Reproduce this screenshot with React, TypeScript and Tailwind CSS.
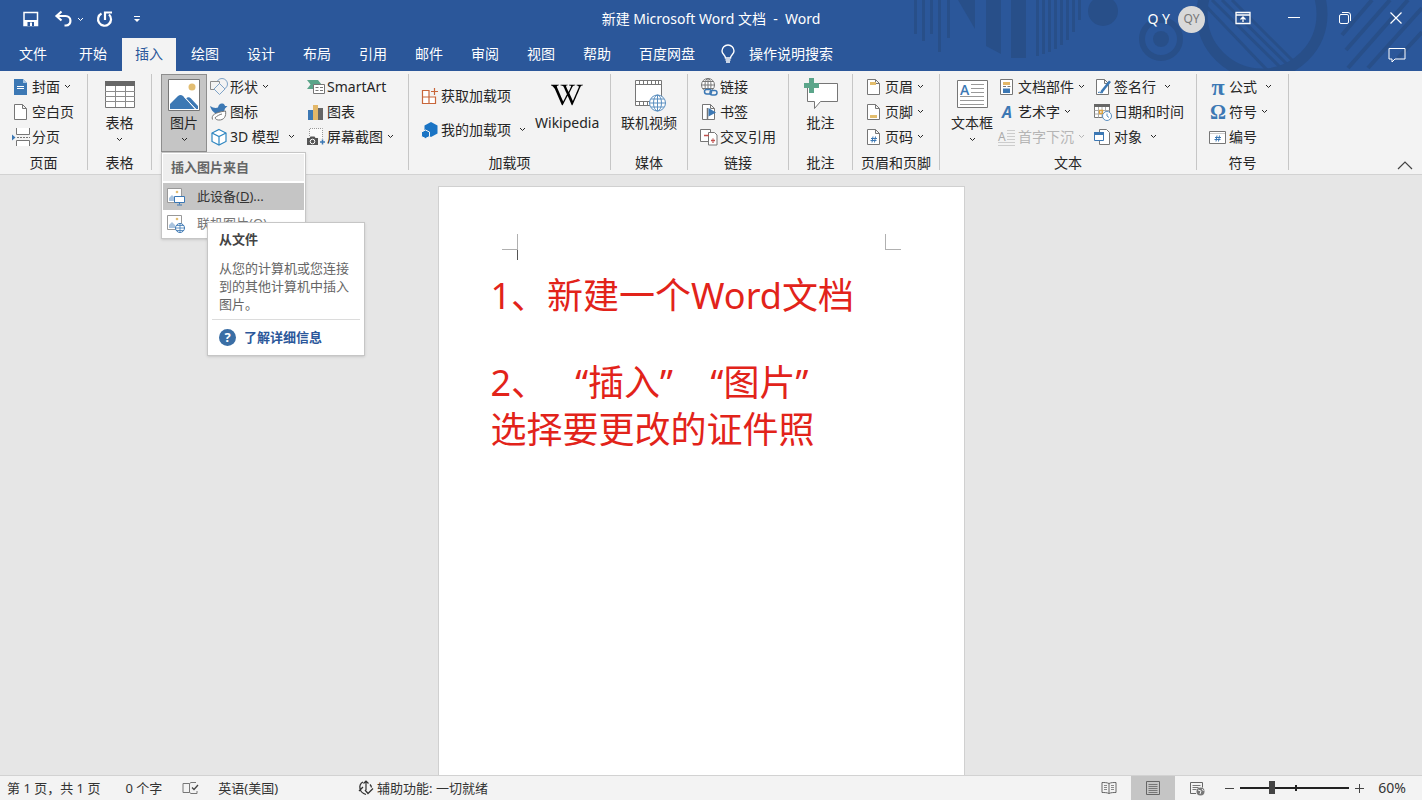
import type { ReactNode } from "react"
import clsx from "clsx"
import { FaWikipediaW } from "react-icons/fa"

const tabs = ["开始", "插入", "绘图", "设计", "布局", "引用", "邮件", "审阅", "视图", "帮助", "百度网盘"]

const BLUE = "#3c78b4"
const GRAY = "#767676"

type IconProps = { w?: number; h?: number; children: ReactNode }

function Svg({ w = 18, h = 18, children }: IconProps) {
  return (
    <svg width={w} height={h} viewBox={`0 0 ${w} ${h}`} fill="none" className="shrink-0 overflow-visible" aria-hidden="true">
      {children}
    </svg>
  )
}

function Chevron({ className }: { className?: string }) {
  return (
    <svg width="7" height="5" viewBox="0 0 7 5" fill="none" className={clsx("shrink-0", className)} aria-hidden="true">
      <path d="M1 1l2.5 2.5L6 1" stroke="currentColor" />
    </svg>
  )
}

const pageOutline = <path d="M2.5 1.5h8l4 4v11h-12z M10.5 1.5v4h4" fill="#fff" stroke={GRAY} />

const icons = {
  cover: (
    <Svg>
      <path d="M2 1h9l4 4v12H2z" fill={BLUE} />
      <path d="M11 1v4h4z" fill="#a9c6e2" />
      <path d="M5 8.500h7M5 10.500h7" stroke="#fff" />
    </Svg>
  ),
  blank: <Svg>{pageOutline}</Svg>,
  pageBreak: (
    <Svg>
      <path d="M4.500 0v6.500h13V0M4.500 18v-5.500h13V18" fill="#fff" stroke={GRAY} />
      <path d="M5 9.500h13" stroke={GRAY} strokeDasharray="2 1" />
      <path d="M0 6.500l3.500 3L0 12.500z" fill={BLUE} />
    </Svg>
  ),
  table: (
    <Svg w={32} h={32}>
      <path d="M1.500 3.500h29v25h-29z" fill="#fff" stroke={GRAY} />
      <path d="M1 2h30v5H1z" fill="#666" />
      <path d="M1 12.500h30M1 17.500h30M1 22.500h30M11.500 7v21M21.500 7v21" stroke="#8c8c8c" />
    </Svg>
  ),
  picture: (
    <Svg w={32} h={32}>
      <path d="M.5.5h31v31H.5z" fill="#fff" stroke={GRAY} />
      <circle cx="24" cy="8" r="3.500" fill="#e2bd72" />
      <path d="M2 30v-5l8-8c1.700-1.500 3.300-1.500 5 0l12 13z" fill={BLUE} />
      <path d="M18 19.500c1.700-1.700 3.300-1.700 5 0l7 7.500v3h-2z" fill={BLUE} />
      <path d="M16.500 18L28 30.500" stroke="#fff" />
    </Svg>
  ),
  shapes: (
    <Svg>
      <circle cx="12" cy="6" r="5.500" stroke="#7fa3c7" />
      <path d="M.5 3.500h9v8h-9z" fill="#f3f3f3" stroke="#8c8c8c" />
      <path d="M9.500 5.500l5.500 5.500-5.500 5.500L4 11z" fill="#f3f3f3" stroke="#7fa3c7" />
    </Svg>
  ),
  iconsBird: (
    <Svg>
      <path d="M0 3c3 2 6 2.500 8 1.500C8.500 1.500 10.500 0 12.500.5c1.600.3 2.300 1.400 2.500 2.500h2.500L15 5.500c-.5 3.500-3 5.300-6.500 5.300C4.500 10.800 1.500 8 0 3z" fill={BLUE} />
      <path d="M2.500 16.500C1 12 5 9.500 15.500 8c1 5-1.500 9.500-7 9-2-.2-3-1-3.500-2.200C7 13 9.500 11.500 12 11" fill="#fff" stroke={GRAY} />
    </Svg>
  ),
  cube: (
    <Svg>
      <path d="M9 1.500l7 3.500v8.500L9 17l-7-3.500V5z" fill="#fff" stroke="#2e86c1" strokeWidth="1.200" />
      <path d="M2 5l7 3.500L16 5M9 8.500V17" stroke="#2e86c1" strokeWidth="1.200" />
    </Svg>
  ),
  smartArt: (
    <Svg>
      <path d="M0 2h11l3.500 4.500L11 11H0l3.500-4.500z" fill="#5ba58a" />
      <path d="M6.500 6.500h11v9h-11z" fill="#fff" stroke={GRAY} />
      <path d="M8.500 9.500h3M13 9.500h3M8.500 12.500h3M13 12.500h3" stroke={GRAY} />
    </Svg>
  ),
  chart: (
    <Svg>
      <path d="M1 7h5v10H1z" fill={BLUE} />
      <path d="M6 2h5v15H6z" fill="#e3b768" />
      <path d="M11 5h5v12h-5z" fill="#666" />
    </Svg>
  ),
  screenshot: (
    <Svg>
      <path d="M2.500 8V.5h13v10" fill="#fafafa" stroke="#999" strokeDasharray="1 1" />
      <path d="M0 10h2.500l1-1.500h4l1 1.500H11v7H0z" fill="#555" />
      <circle cx="5.500" cy="13.500" r="2.300" fill="#555" stroke="#fff" />
      <path d="M15.500 11.500v5M13 14h5" stroke={BLUE} strokeWidth="1.500" />
    </Svg>
  ),
  getAddins: (
    <Svg>
      <path d="M1.500 3.500h6.500v6.500H1.500zM1.500 10h6.500v6.500H1.500zM8 10h6.500v6.500H8z" fill="#fff" stroke="#c8663a" strokeWidth="1.200" />
      <path d="M13.500 1v7M10 4.500h7" stroke="#c8663a" strokeWidth="1.200" />
    </Svg>
  ),
  myAddins: (
    <Svg>
      <path d="M10 1l6.500 3.500v8L10 16l-6.500-3.500v-8z" fill="#1a74c4" />
      <path d="M4.500 9l4 2v4.500l-4 2-4-2V11z" fill="#1a74c4" stroke="#f3f3f3" />
    </Svg>
  ),
  video: (
    <Svg w={32} h={32}>
      <path d="M2.500 1.500h26v25h-26z" fill="#fff" stroke={GRAY} />
      <path d="M2.500 5.500h26M2.500 22.500h26M6.500 1.500v4M10.500 1.500v4M14.500 1.500v4M18.500 1.500v4M22.500 1.500v4M25.500 1.500v4M6.500 22.500v4M10.500 22.500v4M14.500 22.500v4" stroke={GRAY} />
      <circle cx="24.500" cy="24" r="8" fill="#fff" stroke="#5b8fc0" />
      <ellipse cx="24.500" cy="24" rx="4" ry="8" stroke="#5b8fc0" />
      <path d="M16.500 24h16M18 20h13M18 28h13M24.500 16v16" stroke="#5b8fc0" />
    </Svg>
  ),
  link: (
    <Svg>
      <circle cx="8" cy="7" r="6.500" fill="#fff" stroke={GRAY} />
      <ellipse cx="8" cy="7" rx="3" ry="6.500" stroke={GRAY} />
      <path d="M1.500 7h13M2.500 3.500h11M2.500 10.500h11M8 .5v13" stroke={GRAY} />
      <rect x="4.500" y="11.500" width="7" height="4.500" rx="2.200" fill="#f3f3f3" stroke={BLUE} strokeWidth="1.500" />
      <rect x="10" y="12.500" width="7" height="4.500" rx="2.200" stroke={BLUE} strokeWidth="1.500" />
    </Svg>
  ),
  bookmark: (
    <Svg>
      {pageOutline}
      <path d="M7.500 5v12" stroke={GRAY} strokeWidth="1.500" />
      <path d="M8.500 5l7.500 4.500-7.500 4z" fill={BLUE} />
    </Svg>
  ),
  crossRef: (
    <Svg>
      <path d="M.5 1.500h10v12H.5z" fill="#fff" stroke={GRAY} />
      <path d="M8.500 4.500h6l2.500 2.500v10h-8.500z" fill="#fff" stroke={GRAY} />
      <path d="M4 7.500h5M11 12.500h4M13 10.500v1M13 13.500v1.500" stroke="#c0504d" strokeWidth="1.300" />
    </Svg>
  ),
  comment: (
    <Svg w={34} h={32}>
      <path d="M3.500 4.500h30v18h-17l-6 7v-7h-7z" fill="#fff" stroke={GRAY} strokeLinejoin="round" />
      <path d="M5-1h5v5h5v5h-5v5H5V9H0V4h5z" fill="#5ba58a" />
    </Svg>
  ),
  header: (
    <Svg>
      {pageOutline}
      <path d="M5 4h6v3H5z" fill="#e3bd6c" />
    </Svg>
  ),
  footer: (
    <Svg>
      {pageOutline}
      <path d="M5 12h7v3H5z" fill="#e3bd6c" />
    </Svg>
  ),
  pageNumber: (
    <Svg>
      {pageOutline}
      <path d="M8 8.500l-1 6M10.500 8.500l-1 6M6 10.500h6M5.500 12.500h6" stroke={BLUE} />
    </Svg>
  ),
  textBox: (
    <Svg w={32} h={32}>
      <path d="M1.500 1.500h30v27h-30z" fill="#fff" stroke={GRAY} />
      <path d="M15 5.500h13M15 9.500h13M15 13.500h13M4 17.500h24M4 21.500h24M4 25.500h24" stroke="#999" />
      <text x="4" y="16" fontSize="14" fontWeight="600" fill={BLUE} fontFamily="Open Sans">A</text>
    </Svg>
  ),
  docParts: (
    <Svg>
      <path d="M2.500 1.500h12v15h-12z" fill="#fff" stroke={GRAY} />
      <path d="M5 4h7v3H5z" fill="#e3b768" />
      <path d="M5 8.500h3M9.500 8.500h3" stroke={GRAY} />
      <path d="M5 10.500h7V15H5z" fill={BLUE} />
    </Svg>
  ),
  wordArt: <span className="w-[18px] text-center text-base font-bold text-[#3c78b4] italic">A</span>,
  dropCap: (
    <span className="flex w-[18px] items-center">
      <span className="text-xs text-[#aaa]">A</span>
      <Svg w={9} h={18}>
        <path d="M1 2.500h8M1 5.500h8M1 8.500h8M1 11.500h8M-8 14.500H9M-8 17.500H9" stroke="#ccc" />
      </Svg>
    </span>
  ),
  signature: (
    <Svg>
      {pageOutline}
      <path d="M17 4l-8 10-3 1.500 1-3L15 2.500z" fill={BLUE} />
      <path d="M4 14.500c2-1 3 1 5 0" stroke={BLUE} />
    </Svg>
  ),
  dateTime: (
    <Svg>
      <path d="M.5 1.500h15v13H.5z" fill="#fff" stroke={GRAY} />
      <path d="M0 1h16v3H0z" fill="#666" />
      <path d="M.5 7.500h15M.5 11h15M4.500 4v10.500M8 4v10.500M11.500 4v10.500" stroke="#aaa" />
      <path d="M5.500 7.500h3v3h-3z" stroke="#e0a33e" strokeWidth="1.300" />
      <circle cx="13" cy="13" r="4.500" fill="#fff" stroke="#5b8fc0" />
      <path d="M13 10.500V13l2 1.500" stroke="#5b8fc0" />
    </Svg>
  ),
  object: (
    <Svg>
      <path d="M5.500 1.500h7l3 3v12h-10z" fill="#fff" stroke={GRAY} />
      <path d="M.5 4.500h9v8h-9z" fill="#fff" stroke={BLUE} />
      <path d="M0 4h10v3H0z" fill={BLUE} />
    </Svg>
  ),
  pi: <span className="w-[18px] text-center font-['Liberation_Serif',serif] text-2xl leading-6 font-bold text-[#3c78b4]">π</span>,
  omega: <span className="w-[18px] text-center font-['Liberation_Serif',serif] text-xl leading-6 font-bold text-[#3c78b4]">Ω</span>,
  numbering: (
    <Svg>
      <path d="M.5 3.500h16v12H.5z" fill="#fff" stroke={GRAY} />
      <path d="M1 5.500h15" stroke="#ccc" />
      <path d="M8 7.500l-1 6M10.500 7.500l-1 6M6 9.500h6M5.500 11.500h6" stroke={BLUE} />
    </Svg>
  ),
}

type RowProps = { icon: ReactNode; label: string; chevron?: "near" | "far"; disabled?: boolean }

function RowButton({ icon, label, chevron, disabled }: RowProps) {
  return (
    <button
      disabled={disabled}
      className={clsx("flex h-[25px] items-center whitespace-nowrap", disabled ? "text-[#b5b5b5]" : "text-[#262626]")}
    >
      {icon}
      <span className="ml-[2px]">{label}</span>
      {chevron && <Chevron className={chevron === "near" ? "ml-1" : "ml-2"} />}
    </button>
  )
}

function BigButton({ icon, label, chevron, active }: { icon: ReactNode; label: string; chevron?: boolean; active?: boolean }) {
  return (
    <button
      className={clsx(
        "flex h-[78px] flex-col items-center border pt-1 whitespace-nowrap",
        active ? "w-[46px] border-[#8e8e8e] bg-[#c5c5c5]" : "border-transparent px-1"
      )}
    >
      {icon}
      <span className="mt-[2px] leading-5">{label}</span>
      {chevron && <Chevron className="mt-1" />}
    </button>
  )
}

function Group({ label, className, children }: { label?: string; className: string; children: ReactNode }) {
  return (
    <section className={clsx("mt-[3px] mb-1 flex shrink-0 flex-col border-r border-[#c6c6c6]", className)}>
      <div className="flex h-[79px] shrink-0 items-start">{children}</div>
      {label && <div className="shrink-0 text-center leading-5">{label}</div>}
    </section>
  )
}

function HeaderArt() {
  return (
    <svg width="520" height="71" viewBox="902 0 520 71" fill="none" className="absolute top-0 right-0" aria-hidden="true">
      <g stroke="#284f89" strokeWidth="3">
        <path d="M915.500 0v34M923.500 0v41M931.500 0v34M939.500 0v52M948.500 0v38" />
        <path d="M1037.500 0v56M1043.500 0v54M1049.500 0v52M1055.500 0v49M1061.500 0v45M1067.500 0v40M1073.500 0v32M1079.500 0v20" />
        <path d="M1212 0l72 71M1222 0l70 69M1232 0l62 62M1202 2l66 69" />
      </g>
      <g fill="#284f89">
        <path d="M958 0h17v29z" />
        <path d="M986 0h15v54l-15-8z" />
        <path d="M1011 0h15v58h-15z" />
        <circle cx="1103" cy="11" r="15" />
        <circle cx="1161" cy="39" r="8" />
      </g>
      <circle cx="1161" cy="39" r="19" stroke="#284f89" strokeWidth="6" />
      <circle cx="1262" cy="14" r="60" stroke="#284f89" strokeWidth="11" />
      <path d="M1372 0l-30 35M1390 0l-44 50M1408 0l-60 68M1422 8l-54 60M1422 32l-24 26" stroke="#284f89" strokeWidth="4" />
    </svg>
  )
}

function TitleBar() {
  return (
    <div className="relative grid h-[38px] grid-cols-[1fr_auto_1fr] items-center">
      <div className="flex items-center pl-[23px]">
        <button aria-label="保存">
          <Svg w={16} h={16}>
            <path d="M1 1.500h13.500v13H1z" stroke="#fff" strokeWidth="1.500" />
            <path d="M1 9h13.500v5.500H1z" fill="#fff" />
            <path d="M4.500 11h6.500v4H4.500z" fill="#2b579a" />
            <path d="M7 11.500h2V15H7z" fill="#fff" />
          </Svg>
        </button>
        <button aria-label="撤消" className="ml-4 flex items-center">
          <Svg w={18} h={18}>
            <path d="M6.500 1.500L1.500 6l5 4.500M2 6h8.500c6.500 0 6.500 9.500.5 9.500H9.500" stroke="#fff" strokeWidth="2.200" />
          </Svg>
          <Chevron className="ml-1" />
        </button>
        <button aria-label="重复" className="ml-3">
          <Svg w={17} h={18}>
            <path d="M5.500 3.500a6.500 6.500 0 1 0 7.500 1" stroke="#fff" strokeWidth="2.200" />
            <path d="M9 10V2.500h7" stroke="#fff" strokeWidth="2.200" />
          </Svg>
        </button>
        <button aria-label="自定义快速访问工具栏" className="ml-5">
          <Svg w={8} h={8}>
            <path d="M1 1.500h6" stroke="#fff" />
            <path d="M1 4h6L4 7z" fill="#fff" />
          </Svg>
        </button>
      </div>
      <h1 className="whitespace-pre">新建 Microsoft Word 文档  -  Word</h1>
      <div className="flex items-center justify-end pr-5">
        <span>Q Y</span>
        <span className="ml-2 flex size-[27px] items-center justify-center rounded-full bg-[#d9d9d9] text-xs text-[#777]">QY</span>
        <button aria-label="功能区显示选项" className="ml-[30px]">
          <Svg w={16} h={16}>
            <path d="M1 1.500h14v11H1zM1 4h14" stroke="#fff" strokeWidth="1.300" />
            <path d="M8 11V6M5.500 8.500L8 6l2.500 2.500" stroke="#fff" strokeWidth="1.300" />
          </Svg>
        </button>
        <button aria-label="最小化" className="ml-[37px]">
          <Svg w={12} h={14}>
            <path d="M0 5.500h12" stroke="#fff" />
          </Svg>
        </button>
        <button aria-label="向下还原" className="ml-[39px]">
          <Svg w={12} h={14}>
            <rect x=".5" y="2.500" width="9" height="9" rx="1.500" stroke="#fff" />
            <path d="M3 .5h6a2.500 2.500 0 0 1 2.500 2.500v6" stroke="#fff" />
          </Svg>
        </button>
        <button aria-label="关闭" className="ml-[39px]">
          <Svg w={12} h={14}>
            <path d="M.5.5l11 11M11.500.5l-11 11" stroke="#fff" strokeWidth="1.200" />
          </Svg>
        </button>
      </div>
    </div>
  )
}

function TabBar() {
  return (
    <nav className="relative flex h-[33px] items-stretch gap-[2px]">
      <button className="w-16 pb-[2px] pl-[19px] text-left">文件</button>
      {tabs.map((tab) => (
        <button key={tab} className={clsx("px-[13px] pb-[2px]", tab === "插入" && "bg-[#f3f3f3] text-[#2b579a]")}>
          {tab}
        </button>
      ))}
      <button className="ml-[11px] flex items-center gap-[14px] pb-[2px]">
        <Svg w={14} h={18}>
          <path d="M4.500 13c0-3-3.500-3.500-3.500-7a6 6 0 0 1 12 0c0 3.500-3.500 4-3.500 7zM4.500 15h5M5 17h4" stroke="#fff" strokeWidth="1.400" />
        </Svg>
        操作说明搜索
      </button>
      <button aria-label="批注" className="mr-4 ml-auto">
        <Svg w={18} h={16}>
          <path d="M1 1.500h16v10.500H7l-3 3v-3H1z" stroke="#fff" />
        </Svg>
      </button>
    </nav>
  )
}

function PictureMenu() {
  return (
    <div className="absolute top-full left-0 z-10 w-[145px] border border-[#c6c6c6] bg-white p-px text-[13px] shadow-sm">
      <div className="bg-[#eeeeee] pl-2 leading-[27px] font-bold text-[#666]">插入图片来自</div>
      <button className="mt-[2px] flex h-[27px] w-full items-center gap-3 bg-[#c5c5c5] pl-1 text-[#333]">
        <Svg>
          <path d="M.5.5h14v14H.5z" fill="#fff" stroke="#999" />
          <circle cx="10" cy="4" r="1.300" fill="#e2bd72" />
          <path d="M2 13V10l3-3 3 3v3z" fill="#a9c3de" />
          <path d="M7.500 8.500h10v6h-10zM12.500 14.500v2M10 17h5" fill="#fff" stroke={BLUE} />
        </Svg>
        <span>此设备(<u>D</u>)...</span>
      </button>
      <button className="flex h-[27px] w-full items-center gap-3 pl-1 text-[#777]">
        <Svg>
          <path d="M.5.5h14v14H.5z" fill="#fff" stroke="#999" />
          <circle cx="10" cy="4" r="1.300" fill="#e2bd72" />
          <path d="M2 13V10l3-3 3 3v3z" fill="#a9c3de" />
          <circle cx="13" cy="13" r="4.500" fill="#fff" stroke={BLUE} />
          <path d="M8.500 13h9M13 8.500v9M9.500 10.500h7M9.500 15.500h7" stroke={BLUE} strokeWidth=".8" />
        </Svg>
        <span>联机图片(<u>O</u>)</span>
      </button>
      <div role="tooltip" className="absolute top-[69px] left-[45px] w-[158px] border border-[#c6c6c6] bg-white text-[#666] shadow-sm">
        <div className="px-[11px] pt-[7px]">
          <div className="leading-[18px] font-bold text-[#444]">从文件</div>
          <p className="mt-[11px] leading-[18px]">从您的计算机或您连接到的其他计算机中插入图片。</p>
        </div>
        <hr className="mx-1 mt-[6px] border-[#dcdcdc]" />
        <a href="#help" className="flex h-[35px] items-center gap-2 px-[11px] font-bold text-[#2b579a]">
          <span className="flex size-[17px] items-center justify-center rounded-full bg-[#3a6ea5] text-white">?</span>
          了解详细信息
        </a>
      </div>
    </div>
  )
}

function Ribbon() {
  return (
    <div className="relative z-10 flex h-[104px] border-b border-[#d2d2d2] bg-[#f3f3f3] text-[#262626]">
      <Group label="页面" className="w-[88px]">
        <div className="pl-3">
          <RowButton icon={icons.cover} label="封面" chevron="near" />
          <RowButton icon={icons.blank} label="空白页" />
          <RowButton icon={icons.pageBreak} label="分页" />
        </div>
      </Group>
      <Group label="表格" className="w-16">
        <div className="mx-auto">
          <BigButton icon={icons.table} label="表格" chevron />
        </div>
      </Group>
      <Group className="w-[257px]">
        <div className="relative ml-[9px]">
          <BigButton icon={icons.picture} label="图片" chevron active />
          <PictureMenu />
        </div>
        <div className="ml-[3px] w-[97px]">
          <RowButton icon={icons.shapes} label="形状" chevron="near" />
          <RowButton icon={icons.iconsBird} label="图标" />
          <RowButton icon={icons.cube} label="3D 模型" chevron="far" />
        </div>
        <div>
          <RowButton icon={icons.smartArt} label="SmartArt" />
          <RowButton icon={icons.chart} label="图表" />
          <RowButton icon={icons.screenshot} label="屏幕截图" chevron="near" />
        </div>
      </Group>
      <Group label="加载项" className="w-[202px]">
        <div className="flex flex-col gap-[9px] pt-[9px] pl-3">
          <RowButton icon={icons.getAddins} label="获取加载项" />
          <RowButton icon={icons.myAddins} label="我的加载项" chevron="far" />
        </div>
        <div className="ml-1">
          <BigButton icon={<FaWikipediaW className="size-8 shrink-0 text-black" />} label="Wikipedia" />
        </div>
      </Group>
      <Group label="媒体" className="w-[77px]">
        <div className="mx-auto">
          <BigButton icon={icons.video} label="联机视频" />
        </div>
      </Group>
      <Group label="链接" className="w-[101px]">
        <div className="pl-3">
          <RowButton icon={icons.link} label="链接" />
          <RowButton icon={icons.bookmark} label="书签" />
          <RowButton icon={icons.crossRef} label="交叉引用" />
        </div>
      </Group>
      <Group label="批注" className="w-16">
        <div className="mx-auto">
          <BigButton icon={icons.comment} label="批注" />
        </div>
      </Group>
      <Group label="页眉和页脚" className="w-[87px]">
        <div className="pl-3">
          <RowButton icon={icons.header} label="页眉" chevron="near" />
          <RowButton icon={icons.footer} label="页脚" chevron="near" />
          <RowButton icon={icons.pageNumber} label="页码" chevron="near" />
        </div>
      </Group>
      <Group label="文本" className="w-[257px]">
        <div className="ml-[6px]">
          <BigButton icon={icons.textBox} label="文本框" chevron />
        </div>
        <div className="w-[96px]">
          <RowButton icon={icons.docParts} label="文档部件" chevron="near" />
          <RowButton icon={icons.wordArt} label="艺术字" chevron="near" />
          <RowButton icon={icons.dropCap} label="首字下沉" chevron="near" disabled />
        </div>
        <div>
          <RowButton icon={icons.signature} label="签名行" chevron="far" />
          <RowButton icon={icons.dateTime} label="日期和时间" />
          <RowButton icon={icons.object} label="对象" chevron="far" />
        </div>
      </Group>
      <Group label="符号" className="w-[92px]">
        <div className="pl-3">
          <RowButton icon={icons.pi} label="公式" chevron="far" />
          <RowButton icon={icons.omega} label="符号" chevron="near" />
          <RowButton icon={icons.numbering} label="编号" />
        </div>
      </Group>
      <button aria-label="折叠功能区" className="mr-2 mb-1 ml-auto self-end">
        <Svg w={18} h={10}>
          <path d="M2 9l7-7 7 7" stroke="#444" strokeWidth="1.200" />
        </Svg>
      </button>
    </div>
  )
}

function Document() {
  return (
    <main className="flex min-h-0 flex-1 justify-center overflow-hidden bg-[#e6e6e6] pt-[11px] pr-5">
      <article className="w-[527px] border border-b-0 border-[#d0d0d0] bg-white pt-[47px]">
        <div className="flex justify-between px-[63px]">
          <div>
            <div className="h-4 w-4 border-r border-b border-[#b0b0b0]" />
            <div className="ml-auto h-[10px] w-px bg-[#555]" />
          </div>
          <div className="h-4 w-4 border-b border-l border-[#b0b0b0]" />
        </div>
        <div className="mt-3 pl-[52px] text-4xl leading-[47px] whitespace-pre text-[#e2231a]">
          <p>1、新建一个Word文档</p>
          <p className="mt-10">2、   “插入”    “图片”</p>
          <p>选择要更改的证件照</p>
        </div>
      </article>
    </main>
  )
}

function StatusBar() {
  return (
    <footer className="flex h-[25px] shrink-0 items-center border-t border-[#d2d2d2] bg-[#f3f3f3] pl-[7px] text-[13px] whitespace-nowrap text-[#333]">
      <span>第 1 页，共 1 页</span>
      <span className="ml-[25px]">0 个字</span>
      <button aria-label="校对" className="ml-5">
        <Svg w={16} h={14}>
          <path d="M7.500 2.500H1v9h6.500zM7.500 2.500l1.500-1h5M7.500 11.500l1.500 1h6V10" stroke="#777" />
          <path d="M10 6.500l2 2 4-4.500" stroke="#444" strokeWidth="1.300" />
        </Svg>
      </button>
      <button className="ml-5">英语(美国)</button>
      <button className="ml-20 flex items-center gap-1">
        <Svg w={15} h={16}>
          <path d="M8 1v9M5.500 3.500L8 1l2.500 2.500" stroke="#333" strokeWidth="1.200" />
          <path d="M5 2A6 6 0 0 0 2 8.500c.5 3 2.500 5 6 6M12 4.500a6 6 0 0 1 1.500 3M1 11l4-4M7 10l3 3.500 5-5" stroke="#333" strokeWidth="1.300" />
        </Svg>
        辅助功能: 一切就绪
      </button>
      <div className="ml-auto flex h-full items-center pr-4">
        <button aria-label="阅读视图" className="px-[14px]">
          <Svg w={16} h={14}>
            <path d="M8 2.500c-2-1-4.500-1-7-1v10c2.500 0 5 0 7 1 2-1 4.500-1 7-1v-10c-2.500 0-5 0-7 1zV12.500" stroke="#666" />
            <path d="M3 4.500h3M3 6.500h3M3 8.500h3M10 4.500h3M10 6.500h3M10 8.500h3" stroke="#888" />
          </Svg>
        </button>
        <button aria-label="页面视图" className="h-full bg-[#c5c5c5] px-[14px]">
          <Svg w={16} h={14}>
            <path d="M1.500.5h13v13h-13z" stroke="#666" />
            <path d="M3.500 3.500h9M3.500 5.500h9M3.500 7.500h9M3.500 9.500h9M3.500 11.500h9" stroke="#777" />
          </Svg>
        </button>
        <button aria-label="Web 版式视图" className="px-[14px]">
          <Svg w={16} h={15}>
            <path d="M7 12.500H1.500v-11h12v5" stroke="#666" />
            <path d="M3.500 4.500h8M3.500 6.500h6M3.500 8.500h4" stroke="#777" />
            <circle cx="11.500" cy="10.500" r="4" fill="#777" />
            <path d="M9 9l3 1-1 3M13 8l1.500 2" stroke="#f3f3f3" />
          </Svg>
        </button>
        <button aria-label="缩小" className="ml-[6px]">
          <Svg w={9} h={9}>
            <path d="M0 4.500h9" stroke="#444" />
          </Svg>
        </button>
        <div className="relative mx-[6px] flex items-center">
          <span className="absolute left-1/2 h-[6px] w-[2px] bg-[#222]" />
          <input
            type="range"
            aria-label="缩放"
            min={0}
            max={100}
            defaultValue={28}
            className="relative h-[13px] w-[109px] appearance-none bg-transparent [&::-webkit-slider-runnable-track]:h-[2px] [&::-webkit-slider-runnable-track]:bg-[#222] [&::-webkit-slider-thumb]:-mt-[6px] [&::-webkit-slider-thumb]:h-[13px] [&::-webkit-slider-thumb]:w-[6px] [&::-webkit-slider-thumb]:appearance-none [&::-webkit-slider-thumb]:bg-[#444]"
          />
        </div>
        <button aria-label="放大">
          <Svg w={9} h={9}>
            <path d="M0 4.500h9M4.500 0v9" stroke="#444" />
          </Svg>
        </button>
        <span className="ml-[14px] text-sm">60%</span>
      </div>
    </footer>
  )
}

export default function App() {
  return (
    <div className="flex h-screen flex-col overflow-hidden font-['Noto_Sans','Noto_Sans_CJK_SC',sans-serif] text-sm">
      <header className="relative shrink-0 bg-[#2b579a] text-white">
        <HeaderArt />
        <TitleBar />
        <TabBar />
      </header>
      <Ribbon />
      <Document />
      <StatusBar />
    </div>
  )
}
